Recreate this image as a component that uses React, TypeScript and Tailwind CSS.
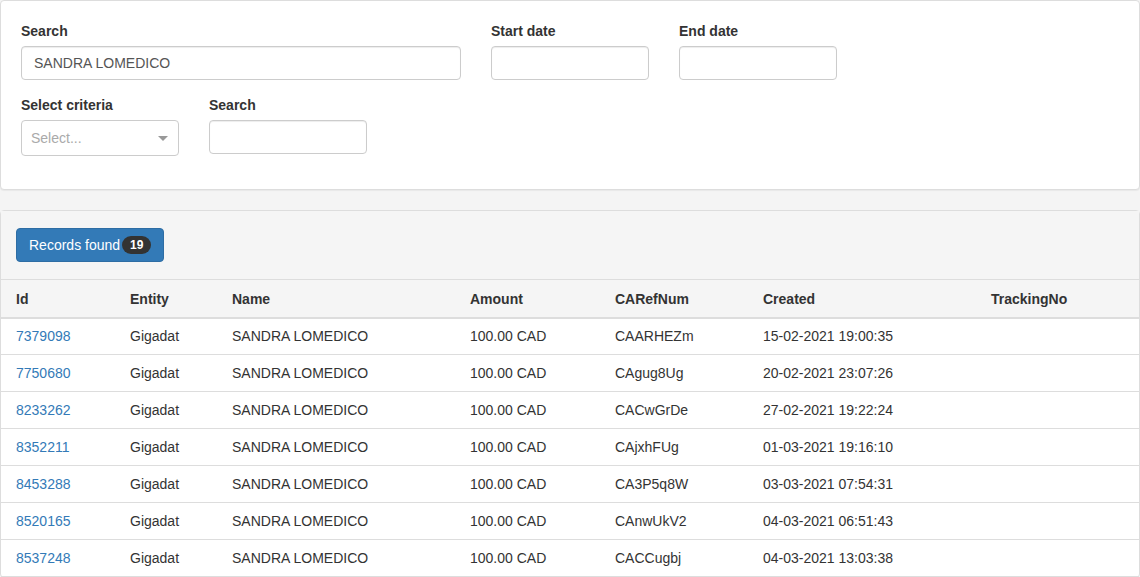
const rows = [
  ["7379098", "CAARHEZm", "15-02-2021 19:00:35"],
  ["7750680", "CAgug8Ug", "20-02-2021 23:07:26"],
  ["8233262", "CACwGrDe", "27-02-2021 19:22:24"],
  ["8352211", "CAjxhFUg", "01-03-2021 19:16:10"],
  ["8453288", "CA3P5q8W", "03-03-2021 07:54:31"],
  ["8520165", "CAnwUkV2", "04-03-2021 06:51:43"],
  ["8537248", "CACCugbj", "04-03-2021 13:03:38"],
];

const inputClass =
  "block h-[34px] rounded-[4px] border border-[#ccc] bg-white px-3 text-sm text-[#555] shadow-[inset_0_1px_1px_rgba(0,0,0,0.075)] outline-none";

const Field = ({ label, width, value }: { label: string; width: string; value?: string }) => (
  <div className={width}>
    <label className="mb-[5px] block text-sm font-bold leading-5 text-[#333]">{label}</label>
    <input type="text" defaultValue={value} className={`${inputClass} w-full`} />
  </div>
);

export default function App() {
  return (
    <div className="h-[577px] overflow-hidden bg-[#f4f4f4] font-['Liberation_Sans',Arial,sans-serif] text-sm text-[#333]">
      <div className="h-[190px] rounded-[4px] border border-[#ddd] bg-white px-5 pt-5 shadow-[0_1px_1px_rgba(0,0,0,0.05)]">
        <div className="flex gap-[30px]">
          <Field label="Search" width="w-[440px]" value="SANDRA LOMEDICO" />
          <Field label="Start date" width="w-[158px]" />
          <Field label="End date" width="w-[158px]" />
        </div>
        <div className="mt-[15px] flex gap-[30px]">
          <div className="w-[158px]">
            <label className="mb-[5px] block text-sm font-bold leading-5 text-[#333]">Select criteria</label>
            <div className="flex h-9 items-center justify-between rounded-[4px] border border-[#ccc] bg-white pl-[9px] pr-[10px]">
              <span className="text-sm text-[#aaa]">Select...</span>
              <span className="h-0 w-0 border-x-[5px] border-t-[5px] border-x-transparent border-t-[#999]" />
            </div>
          </div>
          <Field label="Search" width="w-[158px]" />
        </div>
      </div>

      <div className="mt-5 rounded-[4px] border border-[#ddd] bg-white">
        <div className="flex h-[68px] items-center bg-[#f5f5f5] px-[15px]">
          <button className="flex h-[34px] items-center rounded-[4px] border border-[#2e6da4] bg-[#337ab7] px-3 text-sm text-white">
            Records found
            <span className="ml-[2px] rounded-[10px] bg-[#333] px-2 py-[3px] text-xs font-bold leading-none text-white">
              19
            </span>
          </button>
        </div>
        <table className="w-full table-fixed border-collapse">
          <colgroup>
            <col className="w-[114px]" />
            <col className="w-[102px]" />
            <col className="w-[238px]" />
            <col className="w-[145px]" />
            <col className="w-[148px]" />
            <col className="w-[228px]" />
            <col />
          </colgroup>
          <thead className="bg-[#f5f5f5]">
            <tr className="h-[38px] border-y border-b-2 border-y-[#ddd] text-left font-bold">
              <th className="pl-[15px] pt-[2px]">Id</th>
              <th className="pl-[15px] pt-[2px]">Entity</th>
              <th className="pl-[15px] pt-[2px]">Name</th>
              <th className="pl-[15px] pt-[2px]">Amount</th>
              <th className="pl-[15px] pt-[2px]">CARefNum</th>
              <th className="pl-[15px] pt-[2px]">Created</th>
              <th className="pl-[15px] pt-[2px]">TrackingNo</th>
            </tr>
          </thead>
          <tbody>
            {rows.map(([id, ref, created]) => (
              <tr key={id} className="h-[37px] border-b border-[#ddd]">
                <td className="pl-[15px]">
                  <a href="#" className="text-[#337ab7]">{id}</a>
                </td>
                <td className="pl-[15px]">Gigadat</td>
                <td className="pl-[15px]">SANDRA LOMEDICO</td>
                <td className="pl-[15px]">100.00 CAD</td>
                <td className="pl-[15px]">{ref}</td>
                <td className="pl-[15px]">{created}</td>
                <td className="pl-[15px]"></td>
              </tr>
            ))}
          </tbody>
        </table>
      </div>
    </div>
  );
}
